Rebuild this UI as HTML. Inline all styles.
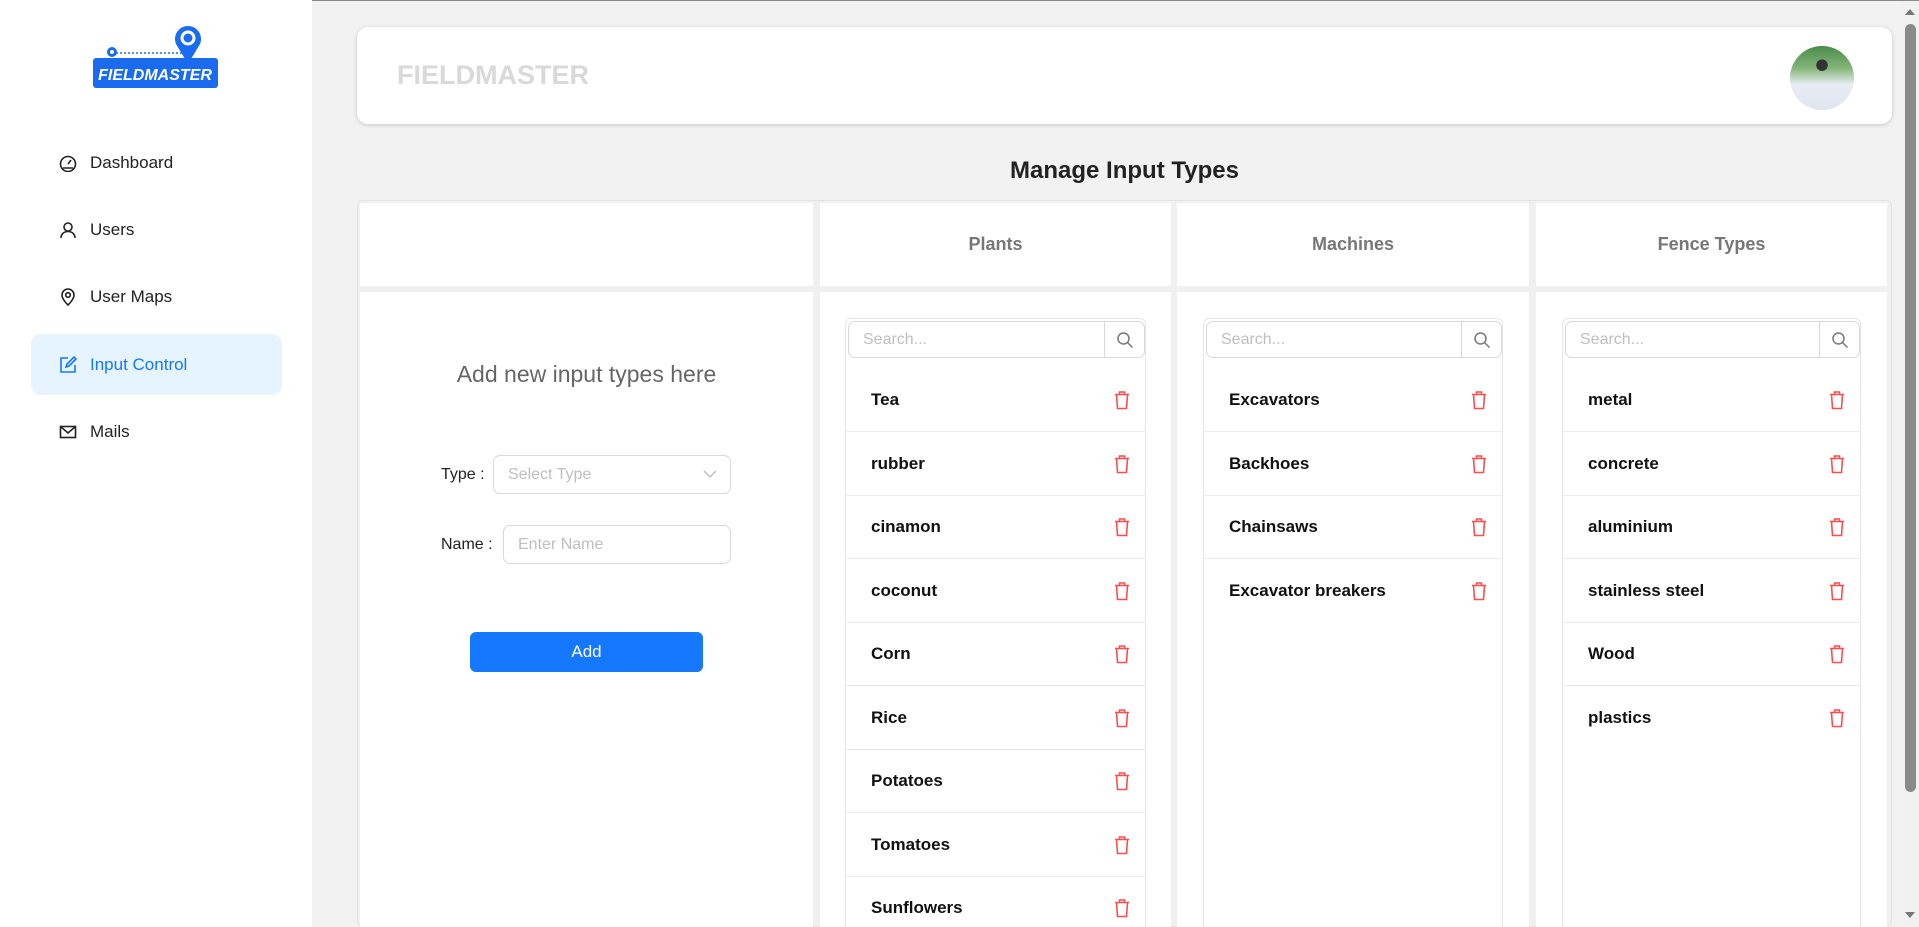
<!DOCTYPE html>
<html style="overflow:hidden"><head><meta charset="utf-8">
<style>
*{box-sizing:border-box;margin:0;padding:0}
html,body{width:1919px;height:927px;overflow:hidden}
body{background:#f2f2f2;font-family:"Liberation Sans",sans-serif;position:relative;color:#222}
.a{position:absolute}
.side{left:0;top:0;width:312px;height:927px;background:#fff}
.nav{left:31px;width:251px;height:61px;display:flex;align-items:center;padding-left:28px;font-size:17px;color:#222;border-radius:10px}
.nav svg{width:18px;height:18px;margin-right:13px;fill:none;stroke:#222;stroke-width:1.6}
.nav.act{background:#e6f4ff;color:#1677ff}
.nav.act svg{stroke:#1677ff}
.cell{background:#fff}
.hd{display:flex;align-items:center;justify-content:center;font-size:18px;font-weight:bold;color:#777}
.list{border:1px solid #e6e6e6;border-bottom:none;border-radius:6px 6px 0 0}
.srch{position:absolute;left:2px;right:0;top:2px;height:37px;border:1px solid #d9d9d9;border-radius:7px;display:flex}
.srch span{flex:1;padding-left:14px;line-height:35px;font-size:16px;color:#bfbfbf}
.srch b{width:40px;border-left:1px solid #d9d9d9;display:flex;align-items:center;justify-content:center}
.it{position:absolute;left:0;right:0;height:64px;border-bottom:1px solid #ececec;display:flex;align-items:center;justify-content:space-between;padding:0 14px 0 25px;font-size:17px;font-weight:bold;color:#111}
.it svg{width:18px;height:20px}
</style></head><body>
<div class="a" style="left:0;top:0;width:1919px;height:1px;background:#888"></div>
<div class="a side"></div>
<svg class="a" style="left:92px;top:24px" width="128" height="66" viewBox="0 0 128 66">
<rect x="1" y="34" width="125" height="30" rx="3" fill="#1a6bf0"/>
<line x1="20" y1="29" x2="92" y2="29" stroke="#1a6bf0" stroke-width="1.5" stroke-dasharray="2 2"/>
<circle cx="20" cy="28" r="5" fill="#1a6bf0"/><circle cx="20" cy="28" r="2" fill="#fff"/>
<path d="M96 40 L84 20 A13 13 0 1 1 108 20 Z" fill="#1a6bf0"/>
<circle cx="96" cy="14" r="6" fill="none" stroke="#fff" stroke-width="3"/>
<text x="63" y="56" text-anchor="middle" fill="#fff" font-family="Liberation Sans" font-weight="bold" font-style="italic" font-size="16">FIELDMASTER</text>
</svg>
<div class="a nav" style="top:132px"><svg viewBox="0 0 18 18"><circle cx="9" cy="10" r="7.5"/><path d="M9 10l3-4M4 14h10"/></svg>Dashboard</div>
<div class="a nav" style="top:199px"><svg viewBox="0 0 18 18"><circle cx="9" cy="6" r="4"/><path d="M2 17c0-4 3-6.5 7-6.5s7 2.5 7 6.5"/></svg>Users</div>
<div class="a nav" style="top:266px"><svg viewBox="0 0 18 18"><path d="M9 17s-6-5.5-6-10a6 6 0 0112 0c0 4.5-6 10-6 10z"/><circle cx="9" cy="7" r="2.3"/></svg>User Maps</div>
<div class="a nav act" style="top:334px"><svg viewBox="0 0 18 18"><path d="M9 2H2v14h14V9"/><path d="M7 11l1-3 7-7 2 2-7 7z"/></svg>Input Control</div>
<div class="a nav" style="top:401px"><svg viewBox="0 0 18 18"><rect x="1.5" y="3.5" width="15" height="11"/><path d="M1.5 3.5L9 10l7.5-6.5"/></svg>Mails</div>

<div class="a" style="left:357px;top:27px;width:1535px;height:97px;background:#fff;border-radius:11px;box-shadow:0 1px 5px rgba(0,0,0,.18)"></div>
<div class="a" style="left:397px;top:60px;font-size:27px;font-weight:bold;color:#d9d9d9">FIELDMASTER</div>
<div class="a" style="left:1790px;top:46px;width:64px;height:64px;border-radius:50%;background:radial-gradient(circle at 50% 30%,#333 0 10%,transparent 11%),linear-gradient(180deg,#4a8a4a 0%,#86b67a 35%,#e8ecf4 60%,#dfe4ee 100%)"></div>

<div class="a" style="left:357px;width:1535px;top:157px;text-align:center;font-size:24px;font-weight:bold;color:#222">Manage Input Types</div>

<div class="a" style="left:357px;top:200px;width:1535px;height:727px;background:#f0f0f0;border:1px solid #e3e3e3;border-radius:6px"></div>
<div class="a cell" style="left:360px;top:203px;width:453px;height:83px"></div>
<div class="a cell hd" style="left:820px;top:203px;width:351px;height:83px">Plants</div>
<div class="a cell hd" style="left:1177px;top:203px;width:352px;height:83px">Machines</div>
<div class="a cell hd" style="left:1536px;top:203px;width:351px;height:83px">Fence Types</div>
<div class="a cell" style="left:360px;top:292px;width:453px;height:635px"></div>
<div class="a cell" style="left:820px;top:292px;width:351px;height:635px"></div>
<div class="a cell" style="left:1177px;top:292px;width:352px;height:635px"></div>
<div class="a cell" style="left:1536px;top:292px;width:351px;height:635px"></div>

<div class="a" style="left:360px;width:453px;top:361px;text-align:center;font-size:23px;color:#666">Add new input types here</div>
<div class="a" style="left:441px;top:466px;font-size:16px">Type :</div>
<div class="a" style="left:493px;top:455px;width:238px;height:39px;border:1px solid #d9d9d9;border-radius:7px;font-size:16px;color:#bfbfbf;padding:10px 0 0 14px">Select Type
<svg style="position:absolute;right:13px;top:14px" width="14" height="9" viewBox="0 0 14 9"><path d="M1 1l6 6 6-6" fill="none" stroke="#bbb" stroke-width="1.3"/></svg></div>
<div class="a" style="left:441px;top:536px;font-size:16px">Name :</div>
<div class="a" style="left:503px;top:525px;width:228px;height:39px;border:1px solid #d9d9d9;border-radius:7px;font-size:16px;color:#bfbfbf;padding:10px 0 0 14px">Enter Name</div>
<div class="a" style="left:470px;top:632px;width:233px;height:40px;background:#1677ff;border-radius:6px;color:#fff;font-size:17px;text-align:center;line-height:40px">Add</div>

<svg width="0" height="0" style="position:absolute;left:0;top:0"><defs>
<symbol id="tr" viewBox="0 0 18 20"><path d="M2 4.5h14M6.5 4.5V2h5v2.5M3.5 4.5l1 14h9l1-14" fill="none" stroke="#ff4d4f" stroke-width="1.6"/></symbol>
<symbol id="sg" viewBox="0 0 18 18"><circle cx="7.5" cy="7.5" r="5.5" fill="none" stroke="#777" stroke-width="1.5"/><path d="M11.5 11.5l5 5" stroke="#777" stroke-width="1.5"/></symbol>
</defs></svg>

<div class="a list" style="left:845px;top:318px;width:301px;height:609px">
<div class="srch"><span>Search...</span><b><svg width="18" height="18"><use href="#sg"/></svg></b></div>
<div class="it" style="top:49px">Tea<svg><use href="#tr"/></svg></div>
<div class="it" style="top:113px">rubber<svg><use href="#tr"/></svg></div>
<div class="it" style="top:176px">cinamon<svg><use href="#tr"/></svg></div>
<div class="it" style="top:240px">coconut<svg><use href="#tr"/></svg></div>
<div class="it" style="top:303px">Corn<svg><use href="#tr"/></svg></div>
<div class="it" style="top:367px">Rice<svg><use href="#tr"/></svg></div>
<div class="it" style="top:430px">Potatoes<svg><use href="#tr"/></svg></div>
<div class="it" style="top:494px">Tomatoes<svg><use href="#tr"/></svg></div>
<div class="it" style="top:557px">Sunflowers<svg><use href="#tr"/></svg></div>
</div>
<div class="a list" style="left:1203px;top:318px;width:300px;height:609px">
<div class="srch"><span>Search...</span><b><svg width="18" height="18"><use href="#sg"/></svg></b></div>
<div class="it" style="top:49px">Excavators<svg><use href="#tr"/></svg></div>
<div class="it" style="top:113px">Backhoes<svg><use href="#tr"/></svg></div>
<div class="it" style="top:176px">Chainsaws<svg><use href="#tr"/></svg></div>
<div class="it" style="top:240px;border:none">Excavator breakers<svg><use href="#tr"/></svg></div>
</div>
<div class="a list" style="left:1562px;top:318px;width:299px;height:609px">
<div class="srch"><span>Search...</span><b><svg width="18" height="18"><use href="#sg"/></svg></b></div>
<div class="it" style="top:49px">metal<svg><use href="#tr"/></svg></div>
<div class="it" style="top:113px">concrete<svg><use href="#tr"/></svg></div>
<div class="it" style="top:176px">aluminium<svg><use href="#tr"/></svg></div>
<div class="it" style="top:240px">stainless steel<svg><use href="#tr"/></svg></div>
<div class="it" style="top:303px">Wood<svg><use href="#tr"/></svg></div>
<div class="it" style="top:367px;border:none">plastics<svg><use href="#tr"/></svg></div>
</div>

<div class="a" style="left:1901px;top:1px;width:18px;height:926px;background:#f1f1f1"></div>
<div class="a" style="left:1905px;top:24px;width:11px;height:768px;background:#8a8a8a;border-radius:6px"></div>
<svg class="a" style="left:1905px;top:8px" width="10" height="8"><path d="M0 7L5 1 10 7Z" fill="#777"/></svg>
<svg class="a" style="left:1905px;top:911px" width="10" height="8"><path d="M0 1L5 7 10 1Z" fill="#777"/></svg>
</body></html>
